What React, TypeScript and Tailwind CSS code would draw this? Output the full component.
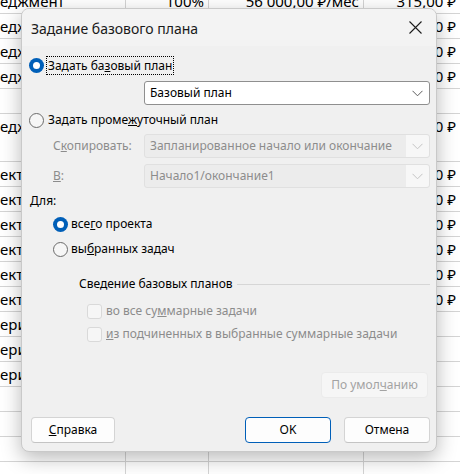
const FONT = { fontFamily: '"Noto Sans", "Segoe UI", Arial, sans-serif' }

// rows of the sheet behind the dialog: [height, name, pct, rate, cost]
const ROWS: [number, string, string, string, string][] = [
  [25, 'еджмент', '100%', '56 000,00 ₽/мес', '315,00 ₽'],
  [25, 'едж', '', '', '00 ₽'],
  [25, 'едж', '', '', '00 ₽'],
  [25, 'едж', '', '', '00 ₽'],
  [25, '', '', '', ''],
  [48, 'едж', '', '', '00 ₽'],
  [25, 'ект', '', '', '00 ₽'],
  [25, 'ект', '', '', '00 ₽'],
  [25, 'ект', '', '', '00 ₽'],
  [25, 'ект', '', '', '00 ₽'],
  [25, 'ект', '', '', '00 ₽'],
  [25, 'ект', '', '', '00 ₽'],
  [25, 'ери', '', '', ''],
  [25, 'ери', '', '', ''],
  [25, 'ери', '', '', ''],
  [25, '', '', '', ''],
  [25, '', '', '', ''],
  [25, '', '', '', ''],
  [26, '', '', '', ''],
]

function Sheet() {
  return (
    <div className="absolute inset-0 overflow-hidden bg-white" style={FONT}>
      <div className="flex flex-col" style={{ marginTop: -11 }}>
        {ROWS.map((r, i) => (
          <div
            key={i}
            className={`flex text-[15px] text-black border-b ${i === ROWS.length - 1 ? 'border-[#8a8a8a]' : 'border-[#d4d4d4]'}`}
            style={{ height: r[0] }}
          >
            <div className="w-[125px] leading-[24px] whitespace-nowrap">
              <span className={`inline-block overflow-hidden align-top ${i === 0 ? '' : 'max-w-[21px]'}`}>{r[1]}</span>
            </div>
            <div className="w-[83px] border-l border-[#d4d4d4] text-right pr-1 leading-[24px]">{r[2]}</div>
            <div className="w-[155px] border-l border-[#d4d4d4] text-right pr-1 leading-[24px] whitespace-nowrap">{r[3]}</div>
            <div className="w-[97px] border-l border-[#d4d4d4] text-right pr-1 leading-[24px] whitespace-nowrap">{r[4]}</div>
          </div>
        ))}
      </div>
    </div>
  )
}

function Chevron({ disabled }: { disabled?: boolean }) {
  return (
    <svg width="11" height="7" viewBox="0 0 11 7" fill="none">
      <path d="M0.5 0.8 L5.5 5.8 L10.5 0.8" stroke={disabled ? '#c4c4c4' : '#5c5c5c'} strokeWidth="1" />
    </svg>
  )
}

function Radio({ checked }: { checked?: boolean }) {
  if (checked)
    return (
      <span className="w-[15px] h-[15px] rounded-full bg-[#005fb8] flex items-center justify-center shrink-0">
        <span className="w-[7px] h-[7px] rounded-full bg-white" />
      </span>
    )
  return <span className="w-[15px] h-[15px] rounded-full border border-[#6b6b6b] bg-[#f6f6f6] shrink-0" />
}

function Check() {
  return <span className="w-[15px] h-[15px] rounded-[3px] border border-[#d9d9d9] bg-[#f6f6f6] shrink-0" />
}

function Select({ text, disabled }: { text: string; disabled?: boolean }) {
  return (
    <div
      className={`h-[24px] flex-1 flex items-center rounded-[3px] border ${disabled ? 'border-[#e0e0e0] bg-[#ececec]' : 'border-[#8f8f8f] bg-white'}`}
    >
      <span className={`flex-1 pl-[5px] whitespace-nowrap overflow-hidden ${disabled ? 'text-[#8c8c8c]' : 'text-black'}`}>{text}</span>
      <span className={`w-[23px] h-full flex items-center justify-center rounded-r-[3px] ${disabled ? 'bg-[#f7f7f7]' : ''}`}>
        <Chevron disabled={disabled} />
      </span>
    </div>
  )
}

export default function App() {
  return (
    <div className="relative w-[460px] h-[474px] overflow-hidden">
      <Sheet />
      <div
        className="absolute left-[21px] top-[8px] w-[416px] h-[444px] rounded-[8px] border border-[#c9c9c9] bg-[#f0f0f0] shadow-[0_6px_20px_rgba(0,0,0,0.28)] flex flex-col text-[12px] text-black overflow-hidden whitespace-nowrap"
        style={FONT}
      >
        <div className="h-[37px] shrink-0 bg-[#f3f3f3] flex items-center justify-between pl-[9px] pr-[14px]">
          <span className="text-[14px] text-[#1a1a1a] pt-[2px]">Задание базового плана</span>
          <svg width="13" height="13" viewBox="0 0 13 13">
            <path d="M0.5 0.5 L12.5 12.5 M12.5 0.5 L0.5 12.5" stroke="#1c1c1c" strokeWidth="1.1" />
          </svg>
        </div>

        <div className="flex flex-col pl-[7px] pr-[6px]">
          <div className="h-[18px] mt-[10px] flex items-center gap-[3px]">
            <Radio checked />
            <span className="outline outline-1 outline-dotted outline-black px-[1px] leading-[17px]">
              Задать ба<u>з</u>овый план
            </span>
          </div>
          <div className="mt-[7px] pl-[115px] flex">
            <Select text="Базовый план" />
          </div>

          <div className="h-[18px] mt-[6px] flex items-center gap-[4px]">
            <Radio />
            <span>
              Задать проме<u>ж</u>уточный план
            </span>
          </div>
          <div className="mt-[5px] flex items-center pl-[24px]">
            <span className="w-[91px] text-[#8c8c8c]">
              С<u>к</u>опировать:
            </span>
            <Select text="Запланированное начало или окончание" disabled />
          </div>
          <div className="mt-[6px] flex items-center pl-[24px]">
            <span className="w-[91px] text-[#8c8c8c]">
              <u>В</u>:
            </span>
            <Select text="Начало1/окончание1" disabled />
          </div>

          <div className="h-[18px] mt-[4px] flex items-center pl-[1px]">Для:</div>
          <div className="h-[18px] mt-[5px] flex items-center gap-[3px] pl-[24px]">
            <Radio checked />
            <span>
              все<u>г</u>о проекта
            </span>
          </div>
          <div className="h-[18px] mt-[7px] flex items-center gap-[3px] pl-[24px]">
            <Radio />
            <span>
              вы<u>б</u>ранных задач
            </span>
          </div>

          <div className="h-[18px] mt-[17px] flex items-center gap-[4px] pl-[50px]">
            <span>Сведение базовых планов</span>
            <span className="flex-1 h-px bg-[#d6d6d6]" />
          </div>
          <div className="h-[18px] mt-[9px] flex items-center gap-[4px] pl-[58px] text-[#8c8c8c]">
            <Check />
            <span>
              во все су<u>м</u>марные задачи
            </span>
          </div>
          <div className="h-[18px] mt-[5px] flex items-center gap-[4px] pl-[58px] text-[#8c8c8c]">
            <Check />
            <span>
              <u>и</u>з подчиненных в выбранные суммарные задачи
            </span>
          </div>

          <div className="mt-[29px] flex justify-end pr-[2px]">
            <div className="w-[107px] h-[26px] rounded-[4px] border border-[#ebebeb] bg-[#f6f6f6] flex items-center justify-center text-[#a3a3a3]">
              <span>
                По умол<u>ч</u>анию
              </span>
            </div>
          </div>

          <div className="mt-[19px] flex items-center pl-[2px]">
            <div className="w-[84px] h-[26px] rounded-[4px] border border-[#d4d4d4] border-b-[#c4c4c4] bg-[#fdfdfd] flex items-center justify-center">
              <span>
                <u>С</u>правка
              </span>
            </div>
            <div className="flex-1" />
            <div className="w-[86px] h-[26px] rounded-[4px] border border-[#005fb8] bg-[#fdfdfd] flex items-center justify-center">
              OK
            </div>
            <div className="w-[86px] h-[26px] ml-[13px] rounded-[4px] border border-[#d4d4d4] border-b-[#c4c4c4] bg-[#fdfdfd] flex items-center justify-center">
              Отмена
            </div>
          </div>
        </div>
      </div>
    </div>
  )
}
